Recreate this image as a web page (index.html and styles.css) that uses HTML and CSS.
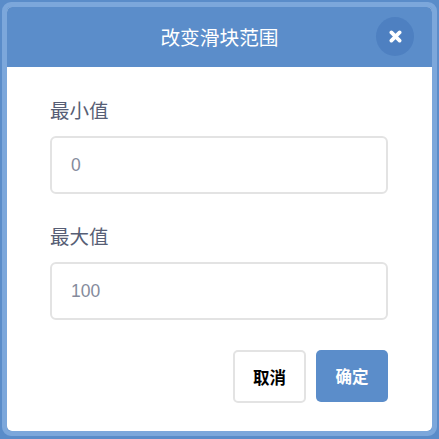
FILE: index.html
```html
<!DOCTYPE html>
<html lang="zh">
<head>
<meta charset="utf-8">
<title>改变滑块范围</title>
<link rel="stylesheet" href="styles.css">
</head>
<body>
<div class="modal">
  <div class="inner">
    <header class="head">
      <span class="title">改变滑块范围</span>
      <button class="close" aria-label="关闭">
        <svg viewBox="0 0 12 12" width="13" height="13"><path d="M2.2 2.2 9.8 9.8M9.8 2.2 2.2 9.8" stroke="#fff" stroke-width="3.4" stroke-linecap="round" fill="none"/></svg>
      </button>
    </header>
    <div class="body">
      <div class="label">最小值</div>
      <div class="input">0</div>
      <div class="label second">最大值</div>
      <div class="input">100</div>
      <div class="actions">
        <button class="btn cancel">取消</button>
        <button class="btn ok">确定</button>
      </div>
    </div>
  </div>
</div>
</body>
</html>
```
FILE: styles.css
```css
html, body { margin: 0; padding: 0; }
body {
  width: 439px;
  height: 439px;
  overflow: hidden;
  background: #5a8cc9;
  font-family: "Liberation Sans", "Noto Sans CJK SC", sans-serif;
}
.modal {
  box-sizing: border-box;
  width: 435px;
  height: 434px;
  margin: 2px 0 0 2px;
  border: 5px solid #7ca7db;
  border-radius: 9px;
}
.inner {
  height: 100%;
  background: #fff;
  border-radius: 5px;
  overflow: hidden;
  display: flex;
  flex-direction: column;
}
.head {
  height: 60px;
  flex: none;
  background: #5b8dca;
  color: #fff;
  display: flex;
  align-items: center;
  justify-content: center;
  position: relative;
}
.title { font-size: 19.7px; margin-top: -1px; }
.close {
  position: absolute;
  right: 18px;
  top: 10px;
  width: 38px;
  height: 39px;
  padding: 0;
  border: 0;
  border-radius: 50%;
  background: #4e80c1;
  display: flex;
  align-items: center;
  justify-content: center;
}
.body {
  flex: 1;
  padding: 31px 44px 0 43px;
  display: flex;
  flex-direction: column;
}
.label {
  font-size: 19.5px;
  line-height: 26px;
  color: #575e75;
  height: 26px;
}
.second { margin-top: 30px; }
.input {
  box-sizing: border-box;
  height: 58px;
  margin-top: 12px;
  border: 2px solid #e3e3e3;
  border-radius: 6px;
  padding-left: 19px;
  display: flex;
  align-items: center;
  color: #858b9c;
  font-size: 17.5px;
}
.actions {
  display: flex;
  justify-content: flex-end;
  gap: 10px;
  margin-top: 30px;
}
.btn {
  box-sizing: border-box;
  height: 53px;
  border-radius: 5px;
  font: bold 16.5px "Liberation Sans", "Noto Sans CJK SC", sans-serif;
  padding: 0;
}
.cancel { width: 73px; background: #fff; color: #000; border: 2px solid #e3e3e3; }
.ok { width: 72px; height: 52px; background: #5b8dca; color: #fff; border: 0; }
```
